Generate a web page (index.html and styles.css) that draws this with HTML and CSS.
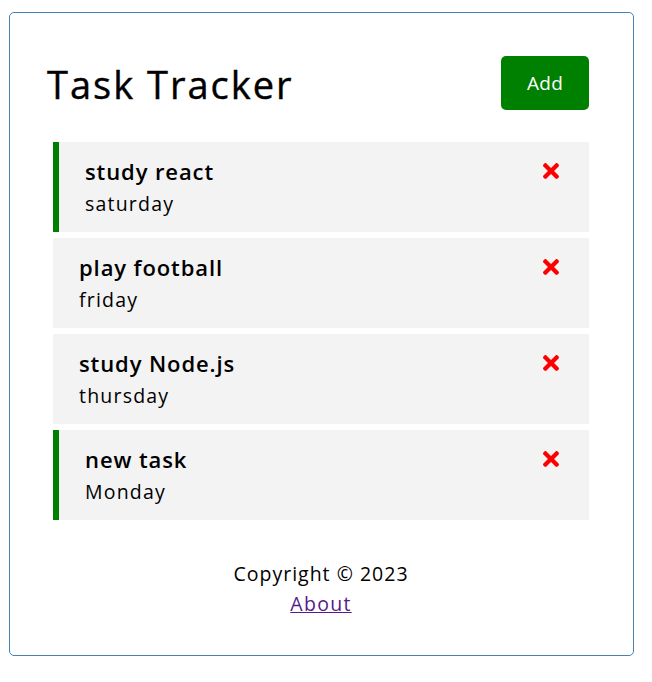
FILE: index.html
```html
<!DOCTYPE html>
<html lang="en">
<head>
<meta charset="utf-8">
<title>Task Tracker</title>
<link rel="stylesheet" href="styles.css">
</head>
<body>
<div class="container">
  <header class="header">
    <h1 class="title">Task Tracker</h1>
    <button class="btn">Add</button>
  </header>
  <div class="tasks">
    <div class="task reminder">
      <h3 class="task-name">study react
        <svg class="del" viewBox="0 80 352 352" aria-hidden="true"><path d="M242.72 256l100.07-100.07c12.28-12.28 12.28-32.19 0-44.48l-22.24-22.24c-12.28-12.28-32.19-12.28-44.48 0L176 189.28 75.93 89.21c-12.28-12.28-32.19-12.28-44.48 0L9.21 111.45c-12.28 12.28-12.28 32.19 0 44.48L109.28 256 9.21 356.07c-12.28 12.28-12.28 32.19 0 44.48l22.24 22.24c12.28 12.28 32.2 12.28 44.48 0L176 322.72l100.07 100.07c12.28 12.28 32.2 12.28 44.48 0l22.24-22.24c12.28-12.28 12.28-32.19 0-44.48L242.72 256z"/></svg>
      </h3>
      <p class="task-day">saturday</p>
    </div>
    <div class="task">
      <h3 class="task-name">play football
        <svg class="del" viewBox="0 80 352 352" aria-hidden="true"><path d="M242.72 256l100.07-100.07c12.28-12.28 12.28-32.19 0-44.48l-22.24-22.24c-12.28-12.28-32.19-12.28-44.48 0L176 189.28 75.93 89.21c-12.28-12.28-32.19-12.28-44.48 0L9.21 111.45c-12.28 12.28-12.28 32.19 0 44.48L109.28 256 9.21 356.07c-12.28 12.28-12.28 32.19 0 44.48l22.24 22.24c12.28 12.28 32.2 12.28 44.48 0L176 322.72l100.07 100.07c12.28 12.28 32.2 12.28 44.48 0l22.24-22.24c12.28-12.28 12.28-32.19 0-44.48L242.72 256z"/></svg>
      </h3>
      <p class="task-day">friday</p>
    </div>
    <div class="task">
      <h3 class="task-name">study Node.js
        <svg class="del" viewBox="0 80 352 352" aria-hidden="true"><path d="M242.72 256l100.07-100.07c12.28-12.28 12.28-32.19 0-44.48l-22.24-22.24c-12.28-12.28-32.19-12.28-44.48 0L176 189.28 75.93 89.21c-12.28-12.28-32.19-12.28-44.48 0L9.21 111.45c-12.28 12.28-12.28 32.19 0 44.48L109.28 256 9.21 356.07c-12.28 12.28-12.28 32.19 0 44.48l22.24 22.24c12.28 12.28 32.2 12.28 44.48 0L176 322.72l100.07 100.07c12.28 12.28 32.2 12.28 44.48 0l22.24-22.24c12.28-12.28 12.28-32.19 0-44.48L242.72 256z"/></svg>
      </h3>
      <p class="task-day">thursday</p>
    </div>
    <div class="task reminder">
      <h3 class="task-name">new task
        <svg class="del" viewBox="0 80 352 352" aria-hidden="true"><path d="M242.72 256l100.07-100.07c12.28-12.28 12.28-32.19 0-44.48l-22.24-22.24c-12.28-12.28-32.19-12.28-44.48 0L176 189.28 75.93 89.21c-12.28-12.28-32.19-12.28-44.48 0L9.21 111.45c-12.28 12.28-12.28 32.19 0 44.48L109.28 256 9.21 356.07c-12.28 12.28-12.28 32.19 0 44.48l22.24 22.24c12.28 12.28 32.2 12.28 44.48 0L176 322.72l100.07 100.07c12.28 12.28 32.2 12.28 44.48 0l22.24-22.24c12.28-12.28 12.28-32.19 0-44.48L242.72 256z"/></svg>
      </h3>
      <p class="task-day">Monday</p>
    </div>
  </div>
  <footer class="footer">
    <p class="copy">Copyright &copy; 2023</p>
    <a class="about" href="#about">About</a>
  </footer>
</div>
</body>
</html>
```

FILE: styles.css
```css
* {
  box-sizing: border-box;
  margin: 0;
  padding: 0;
}

body {
  margin: 0;
  background: #fff;
  font-family: "Open Sans", "Noto Sans", sans-serif;
  color: #000;
}

.container {
  margin: 12px 0 0 9px;
  width: 625px;
  height: 644px;
  border: 1px solid steelblue;
  border-radius: 5px;
  padding: 43px 44px 0 37px;
}

.header {
  display: flex;
  justify-content: space-between;
  align-items: center;
  height: 54px;
  margin-bottom: 32px;
}

.title {
  font-size: 38px;
  font-weight: 400;
  line-height: 54px;
  letter-spacing: 2px;
  padding-top: 1px;
  -webkit-text-stroke: 0.4px #000;
}

.btn {
  width: 88px;
  height: 54px;
  border: none;
  border-radius: 5px;
  background: #008000;
  color: #fff;
  font-family: inherit;
  font-size: 19px;
  letter-spacing: 0.3px;
  cursor: pointer;
}

.tasks {
  display: flex;
  flex-direction: column;
  gap: 6px;
  margin-left: 6px;
}

.task {
  height: 90px;
  background: #f3f3f3;
  padding: 12px 30px 13px 26px;
}

.task.reminder {
  border-left: 6px solid #008000;
}

.task-name {
  display: flex;
  justify-content: space-between;
  align-items: center;
  height: 34px;
  font-size: 22px;
  font-weight: 600;
  letter-spacing: 0.9px;
}

.del {
  width: 16px;
  height: 16px;
  fill: #ff0000;
}

.task-day {
  height: 30px;
  line-height: 30px;
  font-size: 19.5px;
  letter-spacing: 1.2px;
  padding-top: 1px;
}

.footer {
  display: flex;
  flex-direction: column;
  align-items: center;
  margin: 39px 0 0 6px;
  font-size: 19.5px;
  line-height: 30px;
}

.copy {
  letter-spacing: 1px;
}

.about {
  color: #551a8b;
  letter-spacing: 1.3px;
  text-decoration: underline;
}
```
